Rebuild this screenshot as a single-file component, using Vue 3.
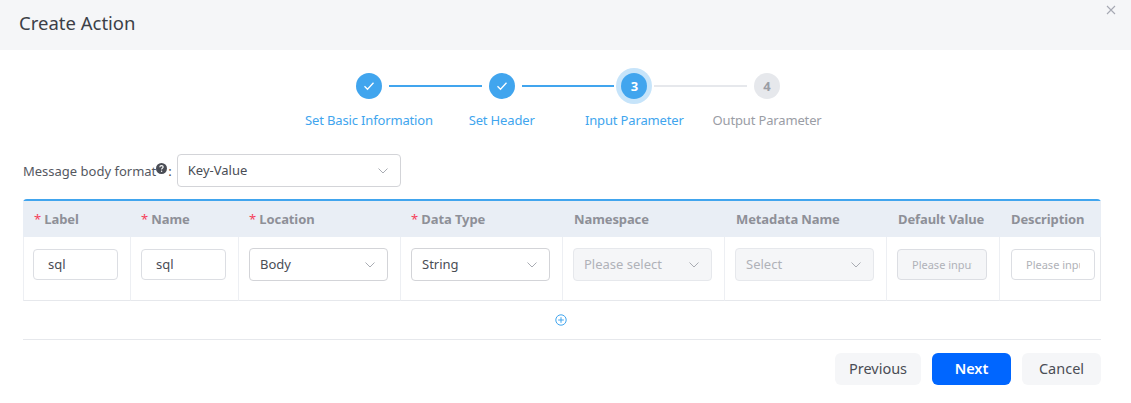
<script setup>
const steps = [
  { label: 'Set Basic Information', state: 'done' },
  { label: 'Set Header', state: 'done' },
  { label: 'Input Parameter', state: 'active', n: 3 },
  { label: 'Output Parameter', state: 'todo', n: 4 },
]
const cols = [
  { t: 'Label', req: true },
  { t: 'Name', req: true },
  { t: 'Location', req: true },
  { t: 'Data Type', req: true },
  { t: 'Namespace' },
  { t: 'Metadata Name' },
  { t: 'Default Value' },
  { t: 'Description' },
]
</script>

<template>
  <div class="dialog">
    <header class="head">
      <h1 class="title">Create Action</h1>
      <svg class="close" width="10" height="10" viewBox="0 0 10 10"><path d="M1 1l8 8M9 1l-8 8" stroke="#a6a9b3" stroke-width="1.1" fill="none" /></svg>
    </header>

    <div class="steps">
      <div v-for="(s, i) in steps" :key="s.label" class="step" :class="s.state">
        <div class="track">
          <span class="line left" :class="{ hide: i === 0 }"></span>
          <span class="dot">
            <svg v-if="s.state === 'done'" width="12" height="10" viewBox="0 0 12 10"><path d="M1.5 5.2l3 3 6-6.4" stroke="#fff" stroke-width="1.3" fill="none" /></svg>
            <template v-else>{{ s.n }}</template>
          </span>
          <span class="line right" :class="{ hide: i === 3 }"></span>
        </div>
        <div class="step-label">{{ s.label }}</div>
      </div>
    </div>

    <div class="format">
      <span class="format-label">Message body format</span>
      <svg class="help" width="11" height="11" viewBox="0 0 11 11"><circle cx="5.5" cy="5.5" r="5.5" fill="#4a4d55" /><path d="M3.8 4.2c0-1 .8-1.6 1.7-1.6s1.7.6 1.7 1.5c0 1.2-1.6 1.2-1.6 2.3" stroke="#fff" stroke-width="1.1" fill="none" /><circle cx="5.6" cy="8.2" r=".7" fill="#fff" /></svg>
      <span class="colon">:</span>
      <div class="select wide"><span>Key-Value</span><svg class="chev" width="10" height="6" viewBox="0 0 10 6"><path d="M.5.5L5 5 9.5.5" stroke="#a9acb3" fill="none" /></svg></div>
    </div>

    <div class="table">
      <div v-for="c in cols" :key="c.t" class="th"><span v-if="c.req" class="req">* </span>{{ c.t }}</div>

      <div class="td first"><div class="input">sql</div></div>
      <div class="td"><div class="input">sql</div></div>
      <div class="td"><div class="select"><span>Body</span><svg class="chev" width="10" height="6" viewBox="0 0 10 6"><path d="M.5.5L5 5 9.5.5" stroke="#a9acb3" fill="none" /></svg></div></div>
      <div class="td"><div class="select"><span>String</span><svg class="chev" width="10" height="6" viewBox="0 0 10 6"><path d="M.5.5L5 5 9.5.5" stroke="#a9acb3" fill="none" /></svg></div></div>
      <div class="td"><div class="select off"><span>Please select</span><svg class="chev" width="10" height="6" viewBox="0 0 10 6"><path d="M.5.5L5 5 9.5.5" stroke="#a9acb3" fill="none" /></svg></div></div>
      <div class="td"><div class="select off"><span>Select</span><svg class="chev" width="10" height="6" viewBox="0 0 10 6"><path d="M.5.5L5 5 9.5.5" stroke="#a9acb3" fill="none" /></svg></div></div>
      <div class="td"><div class="input small off wide-input"><span class="clip">Please input</span></div></div>
      <div class="td last"><div class="input small narrow-input"><span class="clip">Please input</span></div></div>
    </div>

    <div class="add">
      <svg width="12" height="12" viewBox="0 0 12 12"><circle cx="6" cy="6" r="5.2" stroke="#41a5ee" fill="none" /><path d="M6 3.2v5.6M3.2 6h5.6" stroke="#41a5ee" fill="none" /></svg>
    </div>

    <div class="foot">
      <button class="btn prev">Previous</button>
      <button class="btn primary">Next</button>
      <button class="btn">Cancel</button>
    </div>
  </div>
</template>

<style scoped>
.dialog {
  width: 1131px;
  height: 403px;
  overflow: hidden;
  background: #fff;
  font-family: "Noto Sans", "Open Sans", sans-serif;
  font-size: 13px;
  color: #4a4d55;
  display: flex;
  flex-direction: column;
}
.head {
  box-sizing: border-box;
  height: 50px;
  flex: none;
  background: #f5f6f8;
  display: flex;
  align-items: center;
  padding: 0 0 6px 19px;
  position: relative;
}
.title {
  margin: 0;
  font-size: 18.5px;
  font-weight: 400;
  color: #3c3f47;
}
.close {
  position: absolute;
  right: 15px;
  top: 5px;
}
.steps {
  display: flex;
  justify-content: center;
  padding: 23px 0 0 5px;
  height: 64px;
  flex: none;
}
.step {
  width: 132.7px;
  display: flex;
  flex-direction: column;
  align-items: center;
}
.track {
  width: 100%;
  height: 26px;
  display: flex;
  align-items: center;
}
.line {
  flex: 1;
  height: 2px;
  background: #41a5ee;
}
.line.left { margin-right: 7px; }
.line.right { margin-left: 7px; }
.line.hide { visibility: hidden; }
.step.active .line.right,
.step.todo .line { background: #e6e8ec; }
.dot {
  flex: none;
  width: 26px;
  height: 26px;
  border-radius: 50%;
  background: #41a5ee;
  color: #fff;
  font-weight: 700;
  font-size: 13px;
  display: flex;
  align-items: center;
  justify-content: center;
}
.step.active .dot { box-shadow: 0 0 0 5px #c6e4fa; }
.step.todo .dot { background: #e6e8ec; color: #9a9da5; }
.step-label {
  margin-top: 11px;
  line-height: 20px;
  letter-spacing: -0.15px;
  white-space: nowrap;
  color: #41a5ee;
}
.step.todo .step-label { color: #9a9da5; }
.format {
  flex: none;
  margin-top: 17px;
  padding-left: 23px;
  display: flex;
  align-items: center;
}
.format-label { color: #55585f; }
.help { margin-top: -4px; }
.colon { margin: 0 5px 0 1px; }
.select {
  box-sizing: border-box;
  width: 139px;
  height: 33px;
  border: 1px solid #d3d4d8;
  border-radius: 4px;
  padding: 0 12px 0 10px;
  display: flex;
  align-items: center;
  justify-content: space-between;
  background: #fff;
}
.select span { padding-bottom: 2px; }
.select.wide { width: 224px; }
.select.off {
  background: #f5f6f8;
  border-color: #e6e8ec;
  color: #b0b2b8;
}
.table {
  flex: none;
  margin: 12px 30px 0 23px;
  display: grid;
  grid-template-columns: 107px 108px 162px 162px 162px 162px 113px 102px;
  grid-template-rows: 36px 64px;
  border-top: 2px solid #41a5ee;
  border-top-left-radius: 4px;
  border-top-right-radius: 4px;
  width: 1078px;
}
.th {
  background: #e9eef5;
  font-weight: 700;
  letter-spacing: -0.1px;
  color: #8e9098;
  padding-left: 11px;
  display: flex;
  align-items: center;
  white-space: pre;
}
.th:nth-child(n+5) { padding-left: 12px; }
.req { color: #f5405a; font-weight: 400; }
.td {
  box-sizing: border-box;
  border-left: 1px solid #edeff3;
  border-bottom: 1px solid #e6e8ec;
  padding: 11px 0 0 10px;
}
.td.first { padding-left: 9px; }
.td.last { border-right: 1px solid #e6e8ec; padding-left: 11px; }
.input {
  box-sizing: border-box;
  width: 85px;
  height: 31px;
  margin-top: 1px;
  border: 1px solid #dcdee3;
  border-radius: 4px;
  padding: 0 14px 1px;
  display: flex;
  align-items: center;
  background: #fff;
}
.input.small { font-size: 11px; color: #b0b2b8; }
.input.wide-input { width: 90px; }
.input.narrow-input { width: 84px; }
.input.off { background: #f5f6f8; }
.clip { overflow: hidden; white-space: nowrap; }
.add {
  flex: none;
  height: 38px;
  display: flex;
  align-items: center;
  justify-content: center;
  width: 1122px;
}
.foot {
  flex: none;
  margin: 0 30px 0 23px;
  border-top: 1px solid #e6e8ec;
  padding-top: 13px;
  display: flex;
  justify-content: flex-end;
  gap: 11px;
}
.btn {
  height: 32px;
  width: 79px;
  border: 0;
  border-radius: 6px;
  background: #f5f6f8;
  color: #4a4d55;
  font: inherit;
  font-size: 14.5px;
  padding: 0 0 2px;
}
.btn.prev { width: 86px; }
.btn.primary { background: #0066ff; color: #fff; font-weight: 600; }
</style>
